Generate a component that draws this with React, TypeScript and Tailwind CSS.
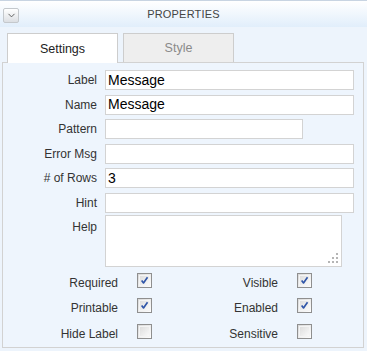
import { ChevronDown } from "lucide-react";

const font = { fontFamily: '"Liberation Sans", Arial, sans-serif' };

function Field({ label, value, short }: { label: string; value?: string; short?: boolean }) {
  return (
    <div className="flex items-center h-[20px]">
      <div className="w-[95px] pr-[1px] text-right text-[12px] text-[#333]">{label}</div>
      <div
        className={`ml-[7px] h-[20px] border border-[#d3d3d3] bg-white px-[2px] flex items-center text-[14px] text-black ${
          short ? "w-[198px]" : "w-[249px]"
        }`}
      >
        {value}
      </div>
    </div>
  );
}

function Check({ label, checked }: { label: string; checked?: boolean }) {
  return (
    <div className="flex items-start h-[15px] w-[160px]">
      <div className="w-[115px] text-right text-[12px] text-[#333] pt-[3px] leading-[15px]">{label}</div>
      <div className="ml-[19px] w-[15px] h-[15px] border border-[#8f8f8f] bg-gradient-to-br from-[#d8d8d8] to-white p-px">
        <div className="w-full h-full border border-[#f4f4f4] flex items-center justify-center">
          {checked && (
            <svg width="11" height="11" viewBox="0 0 11 11">
              <path d="M2 5.5 L4.3 8.5 L9.2 1.5" fill="none" stroke="#2f55a8" strokeWidth="2" strokeLinejoin="round" />
            </svg>
          )}
        </div>
      </div>
    </div>
  );
}

export default function App() {
  return (
    <div style={font} className="w-[367px] h-[351px] bg-[#edf4fc] overflow-hidden">
      {/* header */}
      <div className="h-[27px] border-t border-[#c8d4e2] bg-gradient-to-b from-white to-[#e1eefb] flex items-center relative">
        <button className="absolute left-[3px] top-[7px] w-[16px] h-[15px] rounded-[2px] border border-[#c4c8cc] bg-gradient-to-b from-white to-[#dcdfe3] flex items-center justify-center">
          <ChevronDown size={11} strokeWidth={2} className="text-[#555]" />
        </button>
        <div className="w-full text-center text-[11px] text-[#444] tracking-[0.2px]">PROPERTIES</div>
      </div>

      <div className="pt-[6px] pl-[2px] pr-[3px]">
        {/* tabs */}
        <div className="flex items-end gap-[5px] pl-[5px]">
          <div className="relative z-10 -mb-px w-[111px] h-[30px] border border-b-0 border-[#cdcdcd] bg-white flex items-center justify-center text-[12.5px] text-[#222] pt-px">
            Settings
          </div>
          <div className="w-[111px] h-[29px] border border-b-0 border-[#cdcdcd] bg-[#eeeeee] flex items-center justify-center text-[12.5px] text-[#8a8a8a] pt-px">
            Style
          </div>
        </div>

        {/* panel */}
        <div className="border border-[#d2d2d2] bg-[#eef5fd] h-[286px] pt-[7px]">
          <div className="flex flex-col gap-[4.5px]">
            <Field label="Label" value="Message" />
            <Field label="Name" value="Message" />
            <Field label="Pattern" short />
            <Field label="Error Msg" />
            <Field label="# of Rows" value="3" />
            <Field label="Hint" />
          </div>

          <div className="flex mt-[2px]">
            <div className="w-[95px] pr-[1px] text-right text-[12px] text-[#333] pt-[3px]">Help</div>
            <div className="relative ml-[7px] w-[237px] h-[52px] border border-[#d3d3d3] bg-white">
              <svg className="absolute right-[3px] bottom-[3px]" width="10" height="10" viewBox="0 0 10 10">
                <rect x="8" y="0" width="2" height="2" fill="#b5b5b5" />
                <rect x="4" y="4" width="2" height="2" fill="#b5b5b5" />
                <rect x="8" y="4" width="2" height="2" fill="#b5b5b5" />
                <rect x="0" y="8" width="2" height="2" fill="#b5b5b5" />
                <rect x="4" y="8" width="2" height="2" fill="#b5b5b5" />
                <rect x="8" y="8" width="2" height="2" fill="#b5b5b5" />
              </svg>
            </div>
          </div>

          <div className="mt-[6px] flex flex-col gap-[10.5px]">
            <div className="flex">
              <Check label="Required" checked />
              <Check label="Visible" checked />
            </div>
            <div className="flex">
              <Check label="Printable" checked />
              <Check label="Enabled" checked />
            </div>
            <div className="flex">
              <Check label="Hide Label" />
              <Check label="Sensitive" />
            </div>
          </div>
        </div>
      </div>
    </div>
  );
}
